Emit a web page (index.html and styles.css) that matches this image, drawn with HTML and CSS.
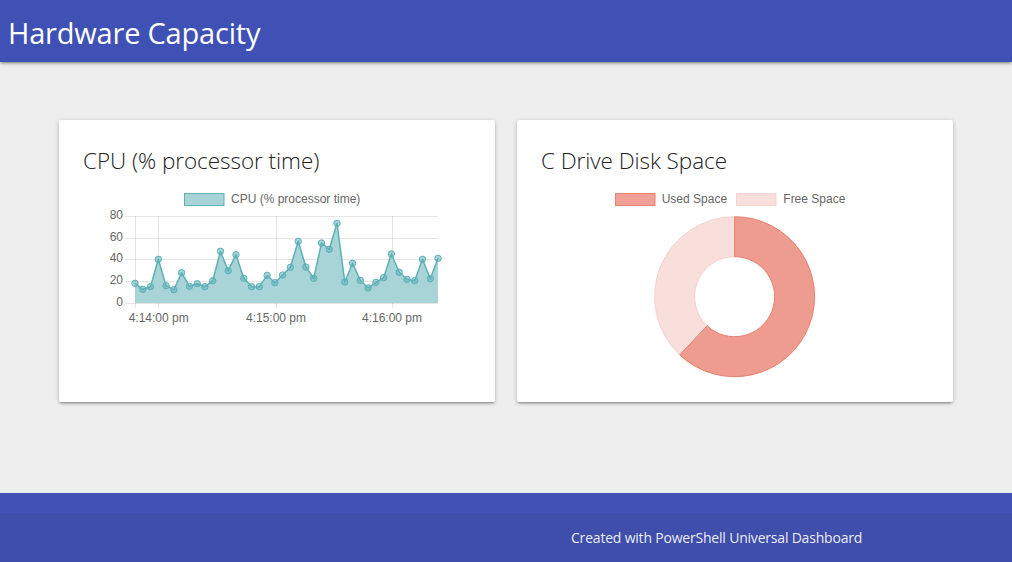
FILE: index.html
```html
<!DOCTYPE html>
<html lang="en">
<head>
<meta charset="utf-8">
<title>Hardware Capacity</title>
<link rel="stylesheet" href="styles.css">
</head>
<body>
<header class="nav">
  <div class="brand">Hardware Capacity</div>
</header>
<main class="content">
  <div class="row">
    <section class="card">
      <h2 class="card-title">CPU (% processor time)</h2>
      <svg class="chart" width="388" height="160" viewBox="83 176 388 160">
        <g class="grid">
          <line x1="125" y1="216.5" x2="438" y2="216.5"/>
          <line x1="125" y1="238.5" x2="438" y2="238.5"/>
          <line x1="125" y1="259.5" x2="438" y2="259.5"/>
          <line x1="125" y1="281.5" x2="438" y2="281.5"/>
          <line x1="125" y1="303.5" x2="438" y2="303.5"/>
          <line x1="135.5" y1="216" x2="135.5" y2="308"/>
          <line x1="158.5" y1="216" x2="158.5" y2="308"/>
          <line x1="276.5" y1="216" x2="276.5" y2="308"/>
          <line x1="392.5" y1="216" x2="392.5" y2="308"/>
        </g>
        <polygon class="area" points="135,303 135,283.3 142.8,289.3 150.5,286.7 158.3,259.3 166.1,285.7 173.9,289.7 181.6,272.7 189.4,286.3 197.2,283.7 204.9,286.7 212.7,280.7 220.5,251.3 228.2,270.7 236,254.7 243.8,278.3 251.6,286.7 259.3,286.7 267.1,275.3 274.9,282.7 282.6,275 290.4,267.3 298.2,241.3 305.9,267 313.7,278.3 321.5,243 329.3,249.3 337,223.3 344.8,282 352.6,263.3 360.3,280.3 368.1,288 375.9,282.3 383.6,277.7 391.4,254 399.2,272.3 407,279.3 414.7,280.7 422.5,259.3 430.3,278.7 438,258.3 438,303"/>
        <polyline class="line" points="135,283.3 142.8,289.3 150.5,286.7 158.3,259.3 166.1,285.7 173.9,289.7 181.6,272.7 189.4,286.3 197.2,283.7 204.9,286.7 212.7,280.7 220.5,251.3 228.2,270.7 236,254.7 243.8,278.3 251.6,286.7 259.3,286.7 267.1,275.3 274.9,282.7 282.6,275 290.4,267.3 298.2,241.3 305.9,267 313.7,278.3 321.5,243 329.3,249.3 337,223.3 344.8,282 352.6,263.3 360.3,280.3 368.1,288 375.9,282.3 383.6,277.7 391.4,254 399.2,272.3 407,279.3 414.7,280.7 422.5,259.3 430.3,278.7 438,258.3"/>
        <g class="pts">
          <circle cx="135" cy="283.3" r="3.2"/><circle cx="142.8" cy="289.3" r="3.2"/><circle cx="150.5" cy="286.7" r="3.2"/><circle cx="158.3" cy="259.3" r="3.2"/>
          <circle cx="166.1" cy="285.7" r="3.2"/><circle cx="173.9" cy="289.7" r="3.2"/><circle cx="181.6" cy="272.7" r="3.2"/><circle cx="189.4" cy="286.3" r="3.2"/>
          <circle cx="197.2" cy="283.7" r="3.2"/><circle cx="204.9" cy="286.7" r="3.2"/><circle cx="212.7" cy="280.7" r="3.2"/><circle cx="220.5" cy="251.3" r="3.2"/>
          <circle cx="228.2" cy="270.7" r="3.2"/><circle cx="236" cy="254.7" r="3.2"/><circle cx="243.8" cy="278.3" r="3.2"/><circle cx="251.6" cy="286.7" r="3.2"/>
          <circle cx="259.3" cy="286.7" r="3.2"/><circle cx="267.1" cy="275.3" r="3.2"/><circle cx="274.9" cy="282.7" r="3.2"/><circle cx="282.6" cy="275" r="3.2"/>
          <circle cx="290.4" cy="267.3" r="3.2"/><circle cx="298.2" cy="241.3" r="3.2"/><circle cx="305.9" cy="267" r="3.2"/><circle cx="313.7" cy="278.3" r="3.2"/>
          <circle cx="321.5" cy="243" r="3.2"/><circle cx="329.3" cy="249.3" r="3.2"/><circle cx="337" cy="223.3" r="3.2"/><circle cx="344.8" cy="282" r="3.2"/>
          <circle cx="352.6" cy="263.3" r="3.2"/><circle cx="360.3" cy="280.3" r="3.2"/><circle cx="368.1" cy="288" r="3.2"/><circle cx="375.9" cy="282.3" r="3.2"/>
          <circle cx="383.6" cy="277.7" r="3.2"/><circle cx="391.4" cy="254" r="3.2"/><circle cx="399.2" cy="272.3" r="3.2"/><circle cx="407" cy="279.3" r="3.2"/>
          <circle cx="414.7" cy="280.7" r="3.2"/><circle cx="422.5" cy="259.3" r="3.2"/><circle cx="430.3" cy="278.7" r="3.2"/><circle cx="438" cy="258.3" r="3.2"/>
        </g>
        <g class="ylab">
          <text x="123" y="219">80</text>
          <text x="123" y="240.7">60</text>
          <text x="123" y="262.3">40</text>
          <text x="123" y="284">20</text>
          <text x="123" y="305.7">0</text>
        </g>
        <g class="xlab">
          <text x="158.7" y="322">4:14:00 pm</text>
          <text x="276" y="322">4:15:00 pm</text>
          <text x="392" y="322">4:16:00 pm</text>
        </g>
        <rect class="legend-cpu" x="184.5" y="193.5" width="39.5" height="12"/>
        <text class="legend-text" x="231" y="203">CPU (% processor time)</text>
      </svg>
    </section>
    <section class="card">
      <h2 class="card-title">C Drive Disk Space</h2>
      <svg class="chart" width="388" height="200" viewBox="541 176 388 200">
        <rect class="legend-used" x="615.5" y="193.5" width="39.5" height="12"/>
        <text class="legend-text" x="661.7" y="203">Used Space</text>
        <rect class="legend-free" x="736.5" y="193.5" width="39.5" height="12"/>
        <text class="legend-text" x="783.3" y="203">Free Space</text>
        <path class="slice-free" d="M 679.7 354.9 A 80 80 0 0 1 734.7 216.7 L 734.7 256.7 A 40 40 0 0 0 707.2 325.8 Z"/>
        <path class="slice-used" d="M 734.7 216.7 A 80 80 0 1 1 679.7 354.9 L 707.2 325.8 A 40 40 0 1 0 734.7 256.7 Z"/>
      </svg>
    </section>
  </div>
</main>
<footer class="page-footer">
  <div class="footer-copyright">
    <span class="footer-text">Created with PowerShell Universal Dashboard</span>
  </div>
</footer>
</body>
</html>
```
FILE: styles.css
```css
html, body {
  margin: 0;
  padding: 0;
}
body {
  background: #eeeeee;
  font-family: "Open Sans", "Noto Sans", sans-serif;
  color: rgba(0, 0, 0, 0.87);
}
.nav {
  height: 62px;
  background: #3f51b5;
  box-shadow: 0 2px 2px 0 rgba(0,0,0,.14), 0 3px 1px -2px rgba(0,0,0,.12), 0 1px 5px 0 rgba(0,0,0,.2);
  position: relative;
  z-index: 2;
  display: flex;
  align-items: center;
}
.brand {
  color: #fff;
  font-size: 29px;
  padding-left: 8px;
  padding-top: 2px;
  letter-spacing: -0.2px;
}
.content {
  box-sizing: border-box;
  height: 431px;
  padding-top: 58px;
}
.row {
  display: flex;
  justify-content: center;
  gap: 22px;
}
.card {
  box-sizing: border-box;
  width: 436px;
  height: 282px;
  background: #fff;
  border-radius: 2px;
  padding: 24px;
  box-shadow: 0 2px 2px 0 rgba(0,0,0,.14), 0 3px 1px -2px rgba(0,0,0,.12), 0 1px 5px 0 rgba(0,0,0,.2);
}
.card-title {
  margin: 0;
  padding-top: 1px;
  font-size: 22.5px;
  font-weight: 300;
  line-height: 31px;
  color: #222;
  letter-spacing: -0.05px;
}
.chart {
  display: block;
  overflow: visible;
}
.grid line {
  stroke: rgba(0, 0, 0, 0.1);
  stroke-width: 1;
}
.area {
  fill: #a8d4d8;
}
.line {
  fill: none;
  stroke: #5cb1b7;
  stroke-width: 1.5;
  stroke-linejoin: round;
}
.pts circle {
  fill: rgba(92, 177, 183, 0.55);
  stroke: #5cb1b7;
  stroke-width: 1;
}
.ylab text, .xlab text, .legend-text {
  font-family: "Liberation Sans", Arial, sans-serif;
  font-size: 12px;
  fill: #666;
}
.ylab text {
  text-anchor: end;
}
.xlab text {
  text-anchor: middle;
}
.legend-cpu {
  fill: #a8d4d8;
  stroke: #5cb1b7;
  stroke-width: 1;
}
.legend-used {
  fill: #f1a195;
  stroke: #e8806f;
  stroke-width: 1;
}
.legend-free {
  fill: #f9dfdb;
  stroke: #f7d4ce;
  stroke-width: 1;
}
.slice-used {
  fill: #ed9c8f;
  stroke: #e8806f;
  stroke-width: 1;
}
.slice-free {
  fill: #f8dfdb;
  stroke: #f5d2cc;
  stroke-width: 1;
}
.page-footer {
  background: #3f51b5;
  padding-top: 20px;
}
.footer-copyright {
  height: 49px;
  line-height: 49px;
  background: rgba(51, 51, 51, 0.08);
  color: rgba(255, 255, 255, 0.92);
  font-size: 14px;
  padding-left: 571px;
}
.footer-text {
  letter-spacing: -0.2px;
}
```
